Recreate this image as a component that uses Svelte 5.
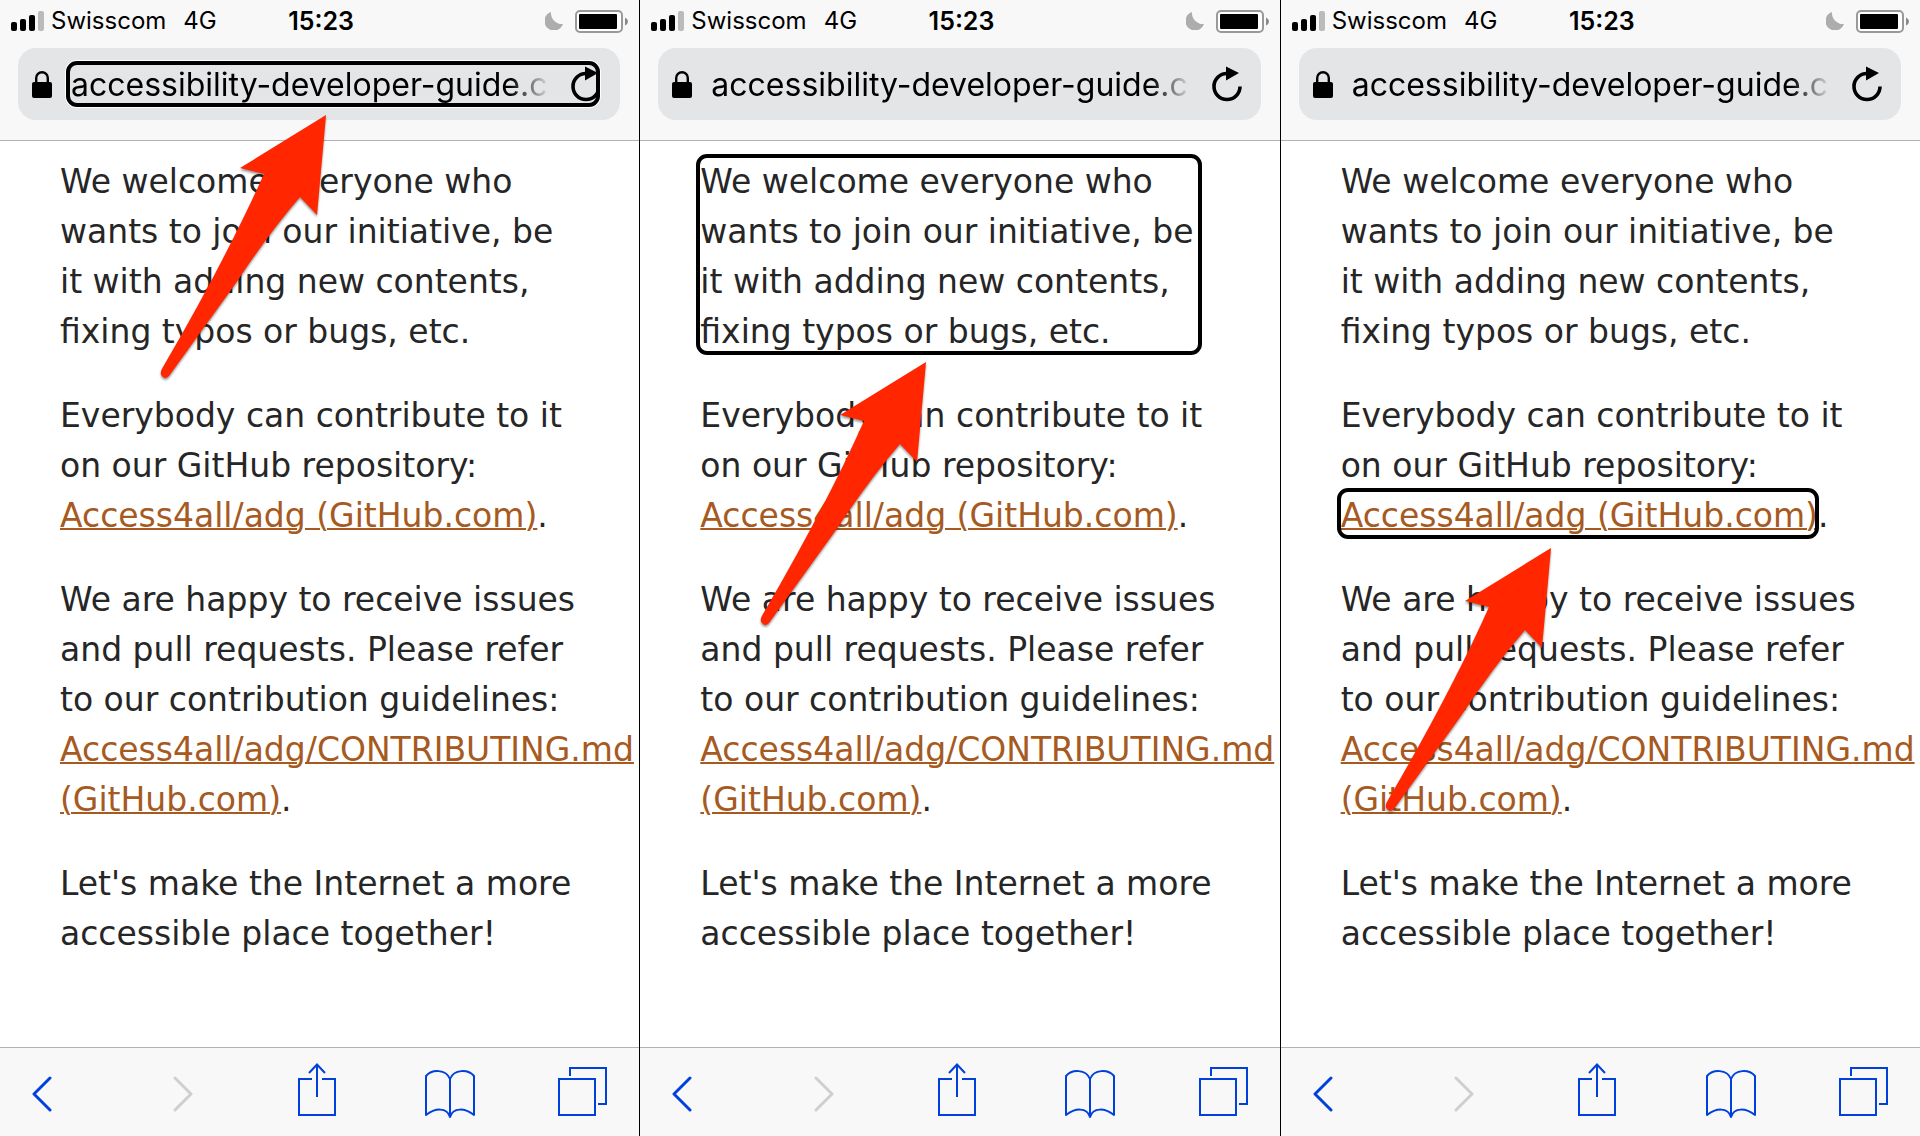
<script>
  const phones = [
    { id: 'address', focus: 'address' },
    { id: 'paragraph', focus: 'paragraph' },
    { id: 'link', focus: 'link' },
  ];
</script>

<main class="board">
  {#each phones as phone (phone.id)}
    <section class="phone" aria-label="Swipe step: {phone.id}">
      <header class="top">
        <div class="status">
          <div class="carrier">
            <svg width="33" height="20" viewBox="0 0 33 20" aria-hidden="true">
              <rect x="0" y="11" width="6" height="9" rx="2" />
              <rect x="9" y="8" width="6" height="12" rx="2" />
              <rect x="18" y="4" width="6" height="16" rx="2" />
              <rect x="27" y="0" width="6" height="20" rx="2" fill="#bbb" />
            </svg>
            <span class="operator">Swisscom</span>
            <span>4G</span>
          </div>
          <time class="clock">15:23</time>
          <div class="power">
            <svg width="18" height="18" viewBox="0 0 18 18" aria-hidden="true">
              <path d="M6 0A11 11 0 0 0 18 12A9.5 9.5 0 1 1 6 0Z" fill="#adadad" />
            </svg>
            <svg width="53" height="23" viewBox="0 0 53 23" aria-hidden="true">
              <rect x="1" y="1" width="46" height="21" rx="4" fill="#fff" stroke="#999" stroke-width="2" />
              <rect x="4" y="4" width="38" height="15" rx="1" />
              <path d="M50 7.500Q53 9 53 11.500T50 15.500Z" fill="#888" />
            </svg>
          </div>
        </div>
        <div class="field">
          <svg class="lock" width="20" height="27" viewBox="0 0 20 27" aria-hidden="true">
            <path d="M4.200 12V7a5.800 5.800 0 0 1 11.600 0v5" fill="none" stroke="#000" stroke-width="2.400" />
            <rect x="0" y="11" width="20" height="16" rx="2" />
          </svg>
          <div class="location">
            <button class="url" type="button">accessibility-developer-guide.c</button>
            <button class="reload" type="button" aria-label="Reload">
              <svg width="32" height="36" viewBox="0 0 32 36" aria-hidden="true">
                <path d="M16 7.500A13 13 0 1 0 29 20.500" fill="none" stroke="#000" stroke-width="3.600" />
                <path d="M15 0.500L28 7L15 14.500Z" />
              </svg>
            </button>
            {#if phone.focus === 'address'}<span class="ring ring-address"></span>{/if}
          </div>
        </div>
      </header>

      <article class="page">
        <p>
          We welcome everyone who wants to join our initiative, be it with adding new contents, fixing typos or bugs,
          etc.
          {#if phone.focus === 'paragraph'}<span class="ring ring-paragraph"></span>{/if}
        </p>
        <p>
          Everybody can contribute to it on our GitHub repository:
          <a href="#adg">Access4all/adg (GitHub.com){#if phone.focus === 'link'}<span class="ring ring-link"></span>{/if}</a>.
        </p>
        <p>
          We are happy to receive issues and pull requests. Please refer to our contribution guidelines:
          <a href="#contributing"><span class="path">Access4all/adg/CONTRIBUTING.md</span> (GitHub.com)</a>.
        </p>
        <p>Let's make the Internet a more accessible place together!</p>
      </article>

      <nav class="tools" aria-label="Browser">
        <button class="back" type="button" aria-label="Back">
          <svg width="20" height="40" viewBox="0 -4 20 40"><path d="M18 2L2 18L18 34" stroke-width="3" stroke-linecap="round" stroke-linejoin="round" /></svg>
        </button>
        <button type="button" aria-label="Forward" disabled>
          <svg width="20" height="40" viewBox="0 -4 20 40"><path d="M2 2L18 18L2 34" stroke-width="3" stroke-linecap="round" stroke-linejoin="round" /></svg>
        </button>
        <button type="button" aria-label="Share">
          <svg width="38" height="58" viewBox="0 0 38 58"><path d="M14 16H1V52H37V16H24M19 34V2M11 10L19 1.500L27 10" stroke-width="2" /></svg>
        </button>
        <button type="button" aria-label="Bookmarks">
          <svg width="50" height="52" viewBox="0 -4 50 52"><path d="M25 9C21 -1 7 -1 1 6V45C10 38 22 37 25 47C28 37 40 38 49 45V6C43 -1 29 -1 25 9V47" stroke-width="2" stroke-linejoin="round" /></svg>
        </button>
        <button type="button" aria-label="Tabs">
          <svg width="50" height="50" viewBox="0 0 50 50"><path d="M1 12H37V48H1ZM12 9V1H48V37H40" stroke-width="2" /></svg>
        </button>
      </nav>

      <svg class="arrow arrow-{phone.id}" width="166" height="264" viewBox="0 0 166 264" aria-hidden="true">
        <path d="M166 0L157 100L140 82Q109 118 76 168L9 261Q5 265 2 261Q-1 258 3 252Q66 144 104 59L80 53Z" />
      </svg>
    </section>
  {/each}
</main>

<style>
  :global(body) {
    margin: 0;
    background: #000;
  }

  .board {
    display: grid;
    grid-template-columns: repeat(3, minmax(0, 1fr));
    gap: 1px;
    min-height: 100vh;
    color: #000;
    font-family: Inter, "Liberation Sans", sans-serif;
  }

  .phone {
    position: relative;
    display: flex;
    flex-direction: column;
    overflow: hidden;
    background: #fff;
  }

  button {
    padding: 0;
    border: 0;
    background: none;
    color: inherit;
    font: inherit;
  }

  svg {
    display: block;
    flex: none;
  }

  .top {
    padding: 0 19px 20px 18px;
    border-bottom: 1px solid #b2b2b2;
    background: #f8f8f8;
  }

  .status {
    display: grid;
    grid-template-columns: 1fr auto 1fr;
    align-items: center;
    height: 42px;
    margin: 0 -8px 6px -7px;
    font-size: 24px;
    line-height: 42px;
  }

  .carrier,
  .power {
    display: flex;
    align-items: center;
    gap: 7px;
  }

  .operator {
    margin-right: 10px;
  }

  .clock {
    padding-left: 3px;
    font-size: 25px;
    font-weight: 600;
  }

  .power {
    justify-content: flex-end;
    gap: 12px;
  }

  .field {
    display: flex;
    align-items: center;
    gap: 14px;
    height: 72px;
    padding: 0 18px 0 14px;
    border-radius: 18px;
    background: #e4e5e7;
  }

  .location {
    position: relative;
    display: flex;
    flex: 1;
    align-items: center;
    justify-content: space-between;
    gap: 16px;
    min-width: 0;
    height: 48px;
    padding-left: 5px;
  }

  .url {
    flex: 1;
    padding-top: 2px;
    font-size: 32px;
    line-height: 48px;
    text-align: left;
    white-space: nowrap;
    mask-image: linear-gradient(to right, #000 calc(100% - 44px), transparent calc(100% - 4px));
  }

  .ring {
    position: absolute;
    border: 4px solid #000;
    border-radius: 11px;
    pointer-events: none;
  }

  .ring-address {
    inset: 1px 2px 1px 0;
    box-shadow: 0 0 0 1px #fff;
  }

  .ring-paragraph {
    inset: -3px 20px 2px -4px;
  }

  .ring-link {
    inset: -8px -1px -4px -4px;
  }

  .page {
    flex: 1;
    padding: 16px 58px 0 60px;
    color: #262626;
    font-family: "DejaVu Sans", sans-serif;
    font-size: 33px;
    line-height: 50px;
  }

  .page p {
    position: relative;
    margin: 0 0 34px;
  }

  .page a {
    position: relative;
    color: #a65a22;
    text-decoration: underline;
    text-decoration-thickness: 2px;
  }

  .path {
    white-space: nowrap;
  }

  .tools {
    display: flex;
    align-items: center;
    justify-content: space-between;
    height: 88px;
    padding: 0 31px 0 32px;
    border-top: 1px solid #b2b2b2;
    background: #f8f8f8;
    color: #0040dd;
  }

  .tools button {
    display: flex;
    justify-content: center;
    width: 50px;
  }

  .tools .back {
    justify-content: flex-start;
    width: 43px;
  }

  .tools svg {
    fill: none;
    stroke: currentColor;
  }

  .tools button:disabled {
    color: #cfcfcf;
  }

  .arrow {
    position: absolute;
    overflow: visible;
    fill: #ff2600;
    filter: drop-shadow(0 2px 1px rgb(0 0 0 / 40%));
    pointer-events: none;
  }

  .arrow-address {
    top: 115px;
    left: 160px;
  }

  .arrow-paragraph {
    top: 362px;
    left: 120px;
  }

  .arrow-link {
    top: 548px;
    left: 104px;
  }
</style>
